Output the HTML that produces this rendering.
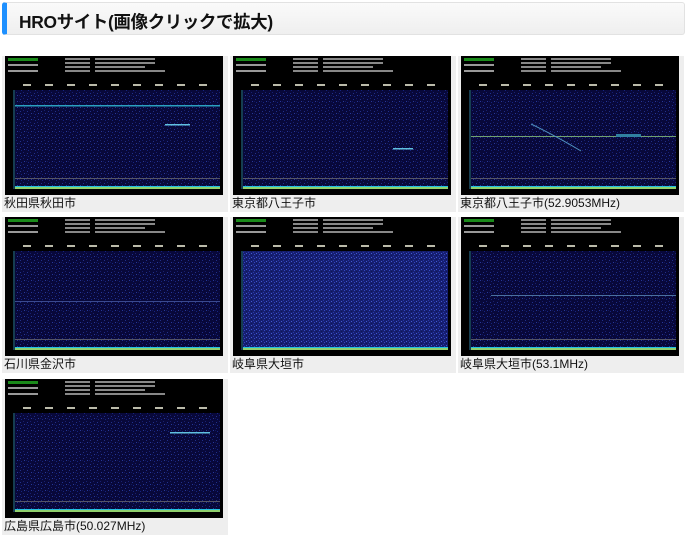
<!DOCTYPE html>
<html><head><meta charset="utf-8"><style>
*{margin:0;padding:0;box-sizing:border-box}
body{width:687px;height:540px;background:#fff;font-family:"Liberation Sans","Noto Sans CJK JP",sans-serif;position:relative;overflow:hidden}
.hd{position:absolute;left:2px;top:2px;width:683px;height:33px;background:linear-gradient(#fafafa,#efefef);border:1px solid #e2e2e2;border-left:5px solid #1e90ff;border-radius:3px}
.hd span{position:absolute;left:12px;top:6px;font-size:17.4px;font-weight:bold;color:#111;letter-spacing:-0.3px}
.cell{position:absolute;width:226px;height:156px;background:#eeeeee}
.cell svg{position:absolute;left:3px;top:0;width:218px;height:139px}
.cap{position:absolute;left:2px;top:138px;font-size:12px;color:#111;white-space:nowrap}
</style></head><body>
<svg width="0" height="0" style="position:absolute">
<defs>
<pattern id="n" width="7" height="6" patternUnits="userSpaceOnUse">
<rect width="7" height="6" fill="#08083a"/>
<rect x="1" y="1" width="1" height="1" fill="#22308a"/><rect x="4" y="0" width="1" height="1" fill="#182070"/>
<rect x="5" y="3" width="1" height="1" fill="#283898"/><rect x="2" y="4" width="1" height="1" fill="#162480"/>
<rect x="0" y="3" width="1" height="1" fill="#101860"/>
</pattern>
<pattern id="n2" width="5" height="4" patternUnits="userSpaceOnUse">
<rect width="5" height="4" fill="#161e70"/>
<rect x="1" y="1" width="1" height="1" fill="#3448c0"/><rect x="3" y="0" width="1" height="1" fill="#4258d0"/>
<rect x="0" y="3" width="1" height="1" fill="#2838a8"/><rect x="3" y="2" width="1" height="1" fill="#0e1658"/>
</pattern>
<g id="base">
<rect width="218" height="139" fill="#000"/>
<rect x="3" y="2" width="30" height="3" fill="#1a8a1a"/>
<rect x="3" y="8" width="30" height="2" fill="#999"/><rect x="3" y="14" width="30" height="2" fill="#999"/>
<rect x="60" y="2" width="25" height="2" fill="#888"/><rect x="60" y="6" width="25" height="2" fill="#888"/><rect x="60" y="10" width="25" height="2" fill="#888"/><rect x="60" y="14" width="25" height="2" fill="#888"/>
<rect x="90" y="2" width="60" height="2" fill="#888"/><rect x="90" y="6" width="60" height="2" fill="#888"/><rect x="90" y="10" width="50" height="2" fill="#888"/><rect x="90" y="14" width="70" height="2" fill="#888"/>
<g fill="#bba">
<rect x="18" y="28" width="8" height="2"/><rect x="40" y="28" width="8" height="2"/><rect x="62" y="28" width="8" height="2"/><rect x="84" y="28" width="8" height="2"/><rect x="106" y="28" width="8" height="2"/><rect x="128" y="28" width="8" height="2"/><rect x="150" y="28" width="8" height="2"/><rect x="172" y="28" width="8" height="2"/><rect x="194" y="28" width="8" height="2"/>
</g>
<line x1="9" y1="34" x2="9" y2="134" stroke="#2a7aa0"/>
<rect x="10" y="34" width="205" height="96" fill="url(#n)"/>
<rect x="10" y="122" width="205" height="1" fill="#556"/>
<rect x="10" y="130" width="205" height="3" fill="#22c0e0"/>
<rect x="10" y="131" width="205" height="2" fill="#d8d820" opacity="0.6"/>
<rect x="0" y="133" width="218" height="6" fill="#000"/>
</g>
</defs></svg>

<div class="hd"><span>HROサイト(画像クリックで拡大)</span></div>

<div class="cell" style="left:2px;top:56px"><svg viewBox="0 0 218 139"><use href="#base"/><rect x="10" y="49" width="205" height="1.5" fill="#2aa0c0"/><rect x="160" y="68" width="25" height="1.5" fill="#60c0e0"/></svg><div class="cap">秋田県秋田市</div></div>
<div class="cell" style="left:230px;top:56px"><svg viewBox="0 0 218 139"><use href="#base"/><rect x="160" y="92" width="20" height="1.5" fill="#60c0e0"/></svg><div class="cap">東京都八王子市</div></div>
<div class="cell" style="left:458px;top:56px"><svg viewBox="0 0 218 139"><use href="#base"/><rect x="10" y="80" width="205" height="1" fill="#70a070"/><path d="M70 68 Q95 80 120 95" stroke="#5090c0" fill="none"/><rect x="155" y="78" width="25" height="3" fill="#3080a0"/></svg><div class="cap">東京都八王子市(52.9053MHz)</div></div>

<div class="cell" style="left:2px;top:217px"><svg viewBox="0 0 218 139"><use href="#base"/><rect x="10" y="84" width="205" height="1" fill="#3a4a90"/></svg><div class="cap">石川県金沢市</div></div>
<div class="cell" style="left:230px;top:217px"><svg viewBox="0 0 218 139"><use href="#base"/><rect x="10" y="34" width="205" height="96" fill="url(#n2)"/></svg><div class="cap">岐阜県大垣市</div></div>
<div class="cell" style="left:458px;top:217px"><svg viewBox="0 0 218 139"><use href="#base"/><rect x="30" y="78" width="185" height="1" fill="#4a70a0"/></svg><div class="cap">岐阜県大垣市(53.1MHz)</div></div>

<div class="cell" style="left:2px;top:379px"><svg viewBox="0 0 218 139"><use href="#base"/><rect x="165" y="53" width="40" height="1.5" fill="#60c0e0"/></svg><div class="cap">広島県広島市(50.027MHz)</div></div>
</body></html>
